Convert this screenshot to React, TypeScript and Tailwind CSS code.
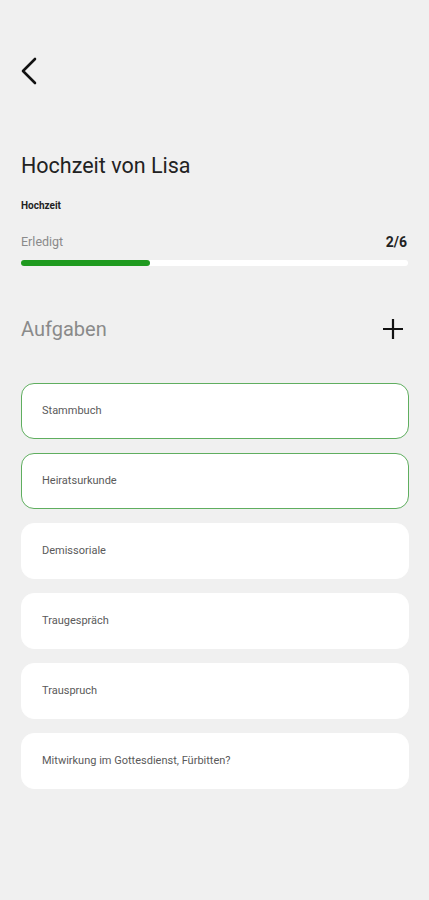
import React from 'react';

interface Task {
  title: string;
  done: boolean;
}

const tasks: Task[] = [
  { title: 'Stammbuch', done: true },
  { title: 'Heiratsurkunde', done: true },
  { title: 'Demissoriale', done: false },
  { title: 'Traugespräch', done: false },
  { title: 'Trauspruch', done: false },
  { title: 'Mitwirkung im Gottesdienst, Fürbitten?', done: false },
];

export default function App() {
  const doneCount = tasks.filter(t => t.done).length;
  const percent = (doneCount / tasks.length) * 100;

  return (
    <div className="min-h-[900px] w-full bg-[#f0f0f0] px-[21px] pt-[56px] font-['Roboto',sans-serif] text-[#1c1c1c]">
      <button className="-ml-[1px] block h-[30px] w-[20px]">
        <svg width="18" height="28" viewBox="0 0 18 28" fill="none">
          <path d="M15 2 L3 14 L15 26" stroke="#111" strokeWidth="2.6" strokeLinecap="round" strokeLinejoin="round" />
        </svg>
      </button>

      <h1 className="mt-[66px] text-[21.5px] leading-[27px] text-[#222]">Hochzeit von Lisa</h1>
      <p className="mt-[21px] text-[10px] font-bold leading-[12px] text-[#222]">Hochzeit</p>

      <div className="mt-[22px] flex items-end justify-between">
        <span className="text-[12.5px] leading-[16px] text-[#8a8a8a]">Erledigt</span>
        <span className="mr-[1px] text-[14px] font-bold leading-[16px] text-[#222]">
          {doneCount}/{tasks.length}
        </span>
      </div>
      <div className="mt-[10px] h-[6px] w-full rounded-full bg-white">
        <div className="h-full rounded-full bg-[#1f9a1f]" style={{ width: `${percent}%` }} />
      </div>

      <div className="mt-[50px] flex items-center justify-between">
        <h2 className="text-[20px] leading-[26px] text-[#8a8a8a]">Aufgaben</h2>
        <svg width="22" height="22" viewBox="0 0 22 22" className="mr-[4px]">
          <path d="M11 1 V21 M1 11 H21" stroke="#111" strokeWidth="2.2" />
        </svg>
      </div>

      <div className="-mr-[1px] mt-[41px] flex flex-col gap-[14px]">
        {tasks.map(task => (
          <div
            key={task.title}
            className={
              task.done
                ? 'flex h-[56px] items-center rounded-[13px] border-[1.5px] border-[#5fae5f] bg-white pl-[20px] text-[11px] text-[#5a5a5a]'
                : 'flex h-[56px] items-center rounded-[13px] border-[1.5px] border-white bg-white pl-[20px] text-[11px] text-[#5a5a5a]'
            }
          >
            {task.title}
          </div>
        ))}
      </div>
    </div>
  );
}
